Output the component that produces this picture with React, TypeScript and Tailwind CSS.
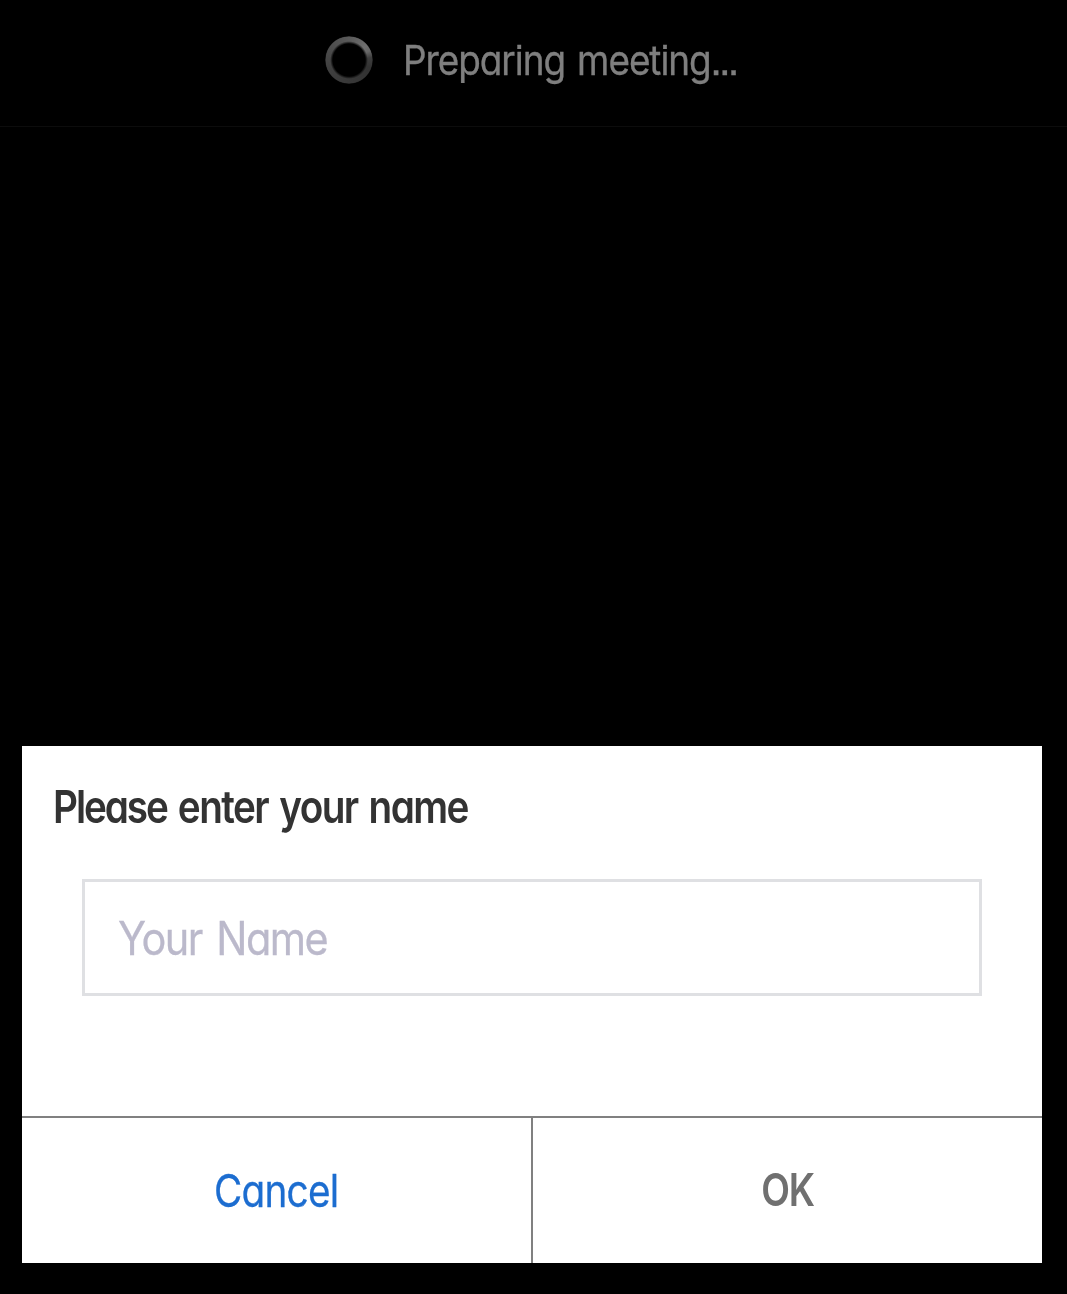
function Spinner() {
  return (
    <div className="h-12 w-12 shrink-0 rounded-full bg-[conic-gradient(from_0deg,#5a5a5a_0deg,#666666_30deg,#707070_50deg,#686868_66deg,#3e3e3e_84deg,#323232_110deg,#383838_180deg,#404040_250deg,#5a5a5a_360deg)] [mask-image:radial-gradient(circle,transparent_16.2px,black_18.8px,black_23px,transparent_24.6px)]" />
  );
}

export default function App() {
  return (
    <div className="flex h-[1294px] w-[1067px] flex-col overflow-hidden bg-black [font-family:Inter,sans-serif] [font-feature-settings:'cv11','ss07'] whitespace-nowrap">
      <header className="flex h-[127px] shrink-0 items-start border-b border-[#0c0c0c] pt-9 pl-[325px]">
        <Spinner />
        <span className="ml-[30px] inline-block origin-left scale-x-[0.9] text-[41px] leading-[48px] tracking-[-1.15px] text-[#7f7f7f] [word-spacing:3px] [-webkit-text-stroke:0.35px_#7f7f7f]">
          Preparing meeting<span className="tracking-[-2px]">...</span>
        </span>
      </header>
      <main className="mt-auto mb-[31px] ml-[22px] flex h-[517px] w-[1020px] flex-col bg-white">
        <h1 className="mt-[33px] ml-[31px] h-[57px] w-[420px] origin-left scale-x-[0.86] text-[45px] leading-[56px] font-semibold tracking-[-1.8px] text-[#333333] [word-spacing:3.2px]">
          <span className="tracking-[-2.4px]">Please</span> enter your name
        </h1>
        <div className="mt-[43px] ml-[60px] flex h-[117px] w-[900px] items-center overflow-hidden border-[3px] border-[#dfe0e3] pl-[33px]">
          <input
            type="text"
            placeholder="Your Name"
            className="h-14 w-[900px] shrink-0 origin-left scale-x-[0.9] bg-transparent text-[46px] leading-[56px] tracking-[-1.7px] text-[#333333] outline-none [word-spacing:5px] placeholder:text-[#bbb9cb] placeholder:[-webkit-text-stroke:0.3px_#bbb9cb]"
          />
        </div>
        <div className="mt-auto flex h-[147px] border-t-2 border-[#808080]">
          <button className="flex w-[511px] items-center justify-center border-r-2 border-[#808080] text-[45px] text-[#1c6dd0]">
            <span className="inline-block scale-x-[0.86] tracking-[-0.9px] [-webkit-text-stroke:0.3px_#1c6dd0]">Cancel</span>
          </button>
          <button className="flex flex-1 items-center justify-center pb-px text-[45px] font-semibold text-[#707070]">
            <span className="inline-block scale-x-[0.83] tracking-[-1.6px]">OK</span>
          </button>
        </div>
      </main>
    </div>
  );
}
